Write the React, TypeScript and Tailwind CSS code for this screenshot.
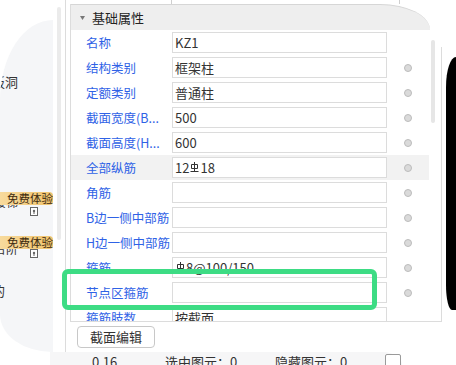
import React from "react";

type Row = { label: string; value: React.ReactNode; dot: boolean; shade?: boolean };

function Rebar() {
  // HRB400 steel grade symbol
  return (
    <svg width="9" height="12" viewBox="0 0 9 12" className="inline-block mx-[1px] align-[-1px]">
      <path d="M4.5 0v9.5M1.5 2.5h6v4h-6zM0.5 9.5h8" stroke="#333" strokeWidth="1" fill="none" />
    </svg>
  );
}

function Lock() {
  return (
    <svg width="8" height="9" viewBox="0 0 8 9">
      <rect x="0.5" y="0.5" width="7" height="8" fill="#fff" stroke="#666" />
      <circle cx="4" cy="4" r="1.2" fill="#666" />
      <path d="M4 5v2" stroke="#666" />
    </svg>
  );
}

const rows: Row[] = [
  { label: "名称", value: "KZ1", dot: false },
  { label: "结构类别", value: "框架柱", dot: true },
  { label: "定额类别", value: "普通柱", dot: true },
  { label: "截面宽度(B...", value: "500", dot: true },
  { label: "截面高度(H...", value: "600", dot: true },
  {
    label: "全部纵筋",
    value: (
      <>
        12
        <Rebar />
        18
      </>
    ),
    dot: true,
    shade: true,
  },
  { label: "角筋", value: "", dot: true },
  { label: "B边一侧中部筋", value: "", dot: true },
  { label: "H边一侧中部筋", value: "", dot: true },
  {
    label: "箍筋",
    value: (
      <>
        <Rebar />
        8@100/150
      </>
    ),
    dot: true,
  },
  { label: "节点区箍筋", value: "", dot: true },
  { label: "箍筋肢数", value: "按截面", dot: false },
];

function Badge() {
  return (
    <div className="absolute left-[-4px] top-0 h-[13px] w-[57px] rounded-[4px] bg-gradient-to-r from-[#f8dca0] to-[#f0c36c] pl-[11px] text-[11.5px] leading-[13px] text-[#3d2a10] whitespace-nowrap">
      免费体验
    </div>
  );
}

export default function App() {
  return (
    <div className="relative w-[456px] h-[365px] overflow-hidden bg-white font-['Noto_Sans_CJK_SC',sans-serif] text-[13px] text-[#333]">
      <div className="flex h-[352px]">
        {/* left tree, mostly cut off */}
        <div className="w-[53px] mt-[20px] h-[332px] bg-[#f5f6f8] rounded-tl-[56px_85px] rounded-bl-[55px_40px] overflow-hidden flex flex-col">
          <div className="mt-[54px] -ml-[8px] leading-[16px] whitespace-nowrap">板洞</div>

          <div className="relative mt-[102px] h-[44px] pt-[2px]">
            <div className="flex items-start h-[22px]">
              <span className="-ml-[6px] text-[12px] leading-[16px] whitespace-nowrap">楼梯</span>
              <span className="ml-[12px] mt-[13px] flex">
                <Lock />
              </span>
            </div>
            <Badge />
          </div>

          <div className="relative h-[44px] pt-[5px]">
            <div className="flex items-start h-[22px]">
              <span className="-ml-[6px] text-[12px] leading-[16px] whitespace-nowrap">台阶</span>
              <span className="ml-[12px] mt-[8px] flex">
                <Lock />
              </span>
            </div>
            <Badge />
          </div>

          <div className="mt-[3px] -ml-[8px] leading-[16px] whitespace-nowrap">的</div>
        </div>

        {/* tree scrollbar */}
        <div className="ml-[4px] w-[4px] mt-[7px] h-[233px] rounded-full bg-[#ebebeb]" />
        <div className="ml-[4px] w-px h-[352px] bg-[#dcdcdc]" />

        {/* property panel */}
        <div className="ml-[4px] w-[372px] flex flex-col">
          <div className="flex h-[4px]">
            <div className="ml-[101px] w-px bg-[#cfcfcf]" />
            <div className="ml-[227px] w-px bg-[#cfcfcf]" />
          </div>

          <div className="h-[318px] flex flex-col border-l border-b border-[#dcdcdc]">
            <div className="w-[359px] h-[26px] flex items-center pl-[9px] bg-[#eeeeee] border-t border-[#d6d6d6] rounded-tr-[50px_26px]">
              <svg width="5" height="4" viewBox="0 0 5 4">
                <path d="M0 0h5L2.5 4z" fill="#777" />
              </svg>
              <span className="ml-[7px] text-[#222] leading-[16px]">基础属性</span>
            </div>

            <div className="flex flex-1 overflow-hidden">
              <div className="w-[358px] flex flex-col">
                {rows.map((r) => (
                  <div
                    key={r.label}
                    className={`flex shrink-0 items-center h-[25px] ${r.shade ? "bg-[#f2f2f2]" : ""}`}
                  >
                    <div className="w-[101px] pl-[15px] text-[12.5px] leading-[16px] whitespace-nowrap overflow-hidden text-[#2f62e6]">
                      {r.label}
                    </div>
                    <div className="w-[215px] h-[21px] border border-[#dcdcdc] bg-white pl-[2px] leading-[19px] whitespace-nowrap">
                      {r.value}
                    </div>
                    <div className="flex-1 flex justify-center">
                      {r.dot && (
                        <div className="w-[8px] h-[8px] rounded-full bg-[#dadada] border border-[#bcbcbc]" />
                      )}
                    </div>
                  </div>
                ))}
              </div>
              <div className="w-[12px]">
                <div className="ml-[2px] mt-[10px] w-[4px] h-[83px] rounded-full bg-[#e6e6e6]" />
              </div>
              <div className="w-px mt-[17px] bg-[#dcdcdc]" />
            </div>
          </div>

          <div className="pt-[4px] pl-[7px]">
            <button className="w-[78px] h-[22px] border border-[#c8c8c8] rounded-[4px] bg-white text-[13px] leading-[20px] text-[#333]">
              截面编辑
            </button>
          </div>
        </div>
      </div>

      {/* status bar, cut at the bottom */}
      <div className="ml-[50px] w-[352px] h-[13px] flex items-start bg-[#f6f6f7] rounded-tr-[30px_20px] leading-[16px] whitespace-nowrap">
        <span className="ml-[42px] mt-[2px] w-[73px]">0.16</span>
        <span className="mt-[2px] w-[110px]">选中图元：0</span>
        <span className="mt-[2px] w-[110px]">隐藏图元：0</span>
        <span className="mt-[2px] w-[16px] h-[14px] border border-[#9a9a9a] bg-white rounded-[2px]" />
      </div>

      {/* highlight frame */}
      <div className="absolute left-[62px] top-[269px] w-[315px] h-[41px] border-[5px] border-[#3ddc84] rounded-[6px]" />

      {/* dark bezel on the right edge */}
      <div className="absolute left-[446px] top-[57px] w-[20px] h-[253px] bg-black rounded-tl-[10px_30px] rounded-bl-[6px_25px]" />
    </div>
  );
}
